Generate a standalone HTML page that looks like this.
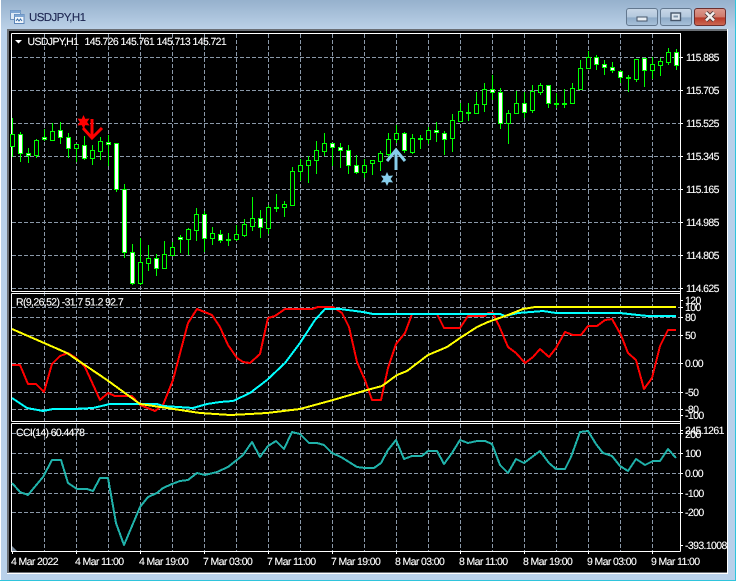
<!DOCTYPE html>
<html><head><meta charset="utf-8"><title>USDJPY,H1</title>
<style>
html,body{margin:0;padding:0;width:738px;height:581px;overflow:hidden;background:#fff}
svg{display:block;position:absolute;left:0;top:0}
text{font-family:"Liberation Sans",sans-serif;font-size:10.5px;letter-spacing:-.62px;fill:#fff;stroke:#fff;stroke-width:.12;text-rendering:geometricPrecision}
.g{fill:none;stroke:#8a98a8;stroke-width:1;stroke-dasharray:4 2;shape-rendering:crispEdges}
.l{fill:none;stroke-width:2;stroke-linejoin:round;shape-rendering:crispEdges}
</style></head><body>
<svg width="738" height="581" viewBox="0 0 738 581" xmlns="http://www.w3.org/2000/svg">
<defs>
<linearGradient id="t" x1="0" y1="0" x2="0" y2="1"><stop offset="0" stop-color="#96b1cd"/><stop offset="1" stop-color="#bcd2e8"/></linearGradient>
<linearGradient id="b" x1="0" y1="0" x2="0" y2="1"><stop offset="0" stop-color="#c9d8e8"/><stop offset=".5" stop-color="#b3c8dd"/><stop offset=".55" stop-color="#8fabc8"/><stop offset="1" stop-color="#a9c2da"/></linearGradient>
<linearGradient id="c" x1="0" y1="0" x2="0" y2="1"><stop offset="0" stop-color="#dc9a8e"/><stop offset=".5" stop-color="#cf7a6c"/><stop offset=".55" stop-color="#b93a28"/><stop offset="1" stop-color="#cc6a55"/></linearGradient>
</defs>
<!-- window chrome -->
<rect x="1" y="0" width="735" height="580" fill="#b9d1ea"/>
<rect x="1" y="0" width="735" height="30" fill="url(#t)"/>
<rect x="0" y="580" width="736" height="1" fill="#2fc4dc"/>
<rect x="735" y="0" width="1" height="581" fill="#2fc4dc"/>
<rect x="7" y="29" width="721" height="545" fill="#fff"/>
<rect x="7" y="29" width="720" height="544" fill="#6a6f75"/>
<rect x="9" y="31" width="718" height="541" fill="#000"/>
<!-- title icon -->
<rect x="10.5" y="10.5" width="10" height="9" fill="#dfeaf6" stroke="#6f93bd"/>
<rect x="10.5" y="10.5" width="10" height="2.5" fill="#7fa6d2"/>
<rect x="14.5" y="14.5" width="9.5" height="9" fill="#f2f7fc" stroke="#5d86b8"/>
<rect x="14.5" y="14.5" width="9.5" height="2.5" fill="#7fa6d2"/>
<path d="M16 21l1.5-2 1.5 2 1.5-2 1.5 2" fill="none" stroke="#3a6ea8"/>
<text x="29" y="21" style="font-size:11.5px;letter-spacing:-.6px;fill:#1c2550;stroke:#1c2550">USDJPY,H1</text>
<!-- buttons -->
<rect x="626.5" y="8.5" width="31" height="17" rx="2.5" fill="url(#b)" stroke="#63788f"/>
<rect x="637" y="17" width="10" height="4" fill="#e8eef4" stroke="#46566a" stroke-width="1"/>
<rect x="660.5" y="8.5" width="31" height="17" rx="2.5" fill="url(#b)" stroke="#63788f"/>
<rect x="671" y="13" width="9.5" height="7.5" fill="#dfe8f1" stroke="#46566a" stroke-width="1.4"/>
<rect x="673.5" y="15.5" width="4.5" height="2" fill="#7f93a8"/>
<rect x="694.5" y="8.5" width="31" height="17" rx="2.5" fill="url(#c)" stroke="#6b2f2f"/>
<path d="M706 12.5l8 8M714 12.5l-8 8" stroke="#4a3a3a" stroke-width="4.2"/>
<path d="M706 12.5l8 8M714 12.5l-8 8" stroke="#f4f1ef" stroke-width="2.6"/>
<!-- grid -->
<path class="g" d="M44.5 34V551M76.5 34V551M108.5 34V551M140.5 34V551M172.5 34V551M204.5 34V551M236.5 34V551M268.5 34V551M300.5 34V551M332.5 34V551M364.5 34V551M396.5 34V551M428.5 34V551M460.5 34V551M492.5 34V551M524.5 34V551M556.5 34V551M588.5 34V551M620.5 34V551M652.5 34V551"/>
<path class="g" d="M12 57.5H680M12 90.5H680M12 123.5H680M12 156.5H680M12 189.5H680M12 222.5H680M12 255.5H680M12 288.5H680M12 307.5H680M12 317.5H680M12 335.5H680M12 363.5H680M12 392.5H680M12 409.5H680M12 433.5H680M12 453.5H680M12 473.5H680M12 493.5H680M12 512.5H680"/>
<!-- frames -->
<path d="M11.5 33.5H680.5V551.5M11.5 33.5V291.5M11.5 291.5H680.5M11.5 293.5H680.5M11.5 293.5V421.5M11.5 421.5H680.5M11.5 423.5H680.5M11.5 423.5V551.5H680.5" fill="none" stroke="#fff" stroke-width="1" shape-rendering="crispEdges"/>
<polygon points="12,546 12,551 17,551" fill="#778899"/>
<polygon points="15,40 22,40 18.5,43.5" fill="#fff"/>
<!-- wicks -->
<path fill="none" stroke="#0f0" stroke-width="1" shape-rendering="crispEdges" d="M12.5 118V157M20.5 132V162M28.5 148V163M36.5 139V158M44.5 129V141M52.5 123V141M60.5 122V144M68.5 133V158M76.5 144V162M84.5 136V160M92.5 145V165M100.5 137V160M108.5 135V166M116.5 143V192M124.5 184V258M132.5 244V285M140.5 238V285M148.5 245V271M156.5 254V276M164.5 241V268M172.5 242V255M180.5 235V253M188.5 228V255M196.5 208V241M204.5 211V252M212.5 227V245M220.5 230V243M228.5 233V246M236.5 225V241M244.5 219V237M252.5 197V231M260.5 210V238M268.5 205V234M276.5 194V212M284.5 201V217M292.5 167V205M300.5 159V181M308.5 156V183M316.5 141V174M324.5 133V156M332.5 143V166M340.5 143V168M348.5 145V174M356.5 155V174M364.5 159V178M372.5 163V175M380.5 151V171M388.5 133V161M396.5 125V143M404.5 132V153M412.5 134V154M420.5 135V149M428.5 127V144M436.5 122V142M444.5 131V155M452.5 114V152M460.5 103V122M468.5 103V121M476.5 92V113M484.5 83V112M492.5 75V100M500.5 88V129M508.5 110V144M516.5 91V113M524.5 92V118M532.5 85V113M540.5 83V95M548.5 85V108M556.5 93V108M564.5 89V108M572.5 83V103M580.5 60V89M588.5 51V68M596.5 55V70M604.5 60V75M612.5 62V73M620.5 70V83M628.5 75V92M636.5 59V82M644.5 58V87M652.5 57V79M660.5 58V76M668.5 48V65M676.5 49V70"/>
<!-- hollow bodies -->
<path fill="#000" stroke="#0f0" stroke-width="1" shape-rendering="crispEdges" d="M10.5 134.5h4v12h-4zM34.5 140.5h4v15h-4zM50.5 131.5h4v9h-4zM74.5 144.5h4v4h-4zM90.5 150.5h4v8h-4zM98.5 141.5h4v10h-4zM138.5 262.5h4v21h-4zM146.5 258.5h4v5h-4zM162.5 254.5h4v14h-4zM170.5 247.5h4v8h-4zM186.5 229.5h4v10h-4zM194.5 214.5h4v16h-4zM210.5 233.5h4v5h-4zM234.5 234.5h4v5h-4zM242.5 224.5h4v11h-4zM250.5 218.5h4v8h-4zM266.5 207.5h4v21h-4zM282.5 204.5h4v3h-4zM290.5 171.5h4v34h-4zM298.5 165.5h4v6h-4zM306.5 160.5h4v5h-4zM314.5 150.5h4v10h-4zM322.5 143.5h4v8h-4zM362.5 165.5h4v7h-4zM370.5 160.5h4v3h-4zM378.5 153.5h4v8h-4zM386.5 139.5h4v15h-4zM394.5 133.5h4v6h-4zM410.5 138.5h4v14h-4zM426.5 130.5h4v9h-4zM450.5 120.5h4v18h-4zM458.5 111.5h4v10h-4zM474.5 104.5h4v9h-4zM482.5 89.5h4v15h-4zM506.5 113.5h4v10h-4zM514.5 103.5h4v10h-4zM530.5 91.5h4v19h-4zM538.5 85.5h4v7h-4zM570.5 88.5h4v15h-4zM578.5 68.5h4v21h-4zM586.5 57.5h4v11h-4zM634.5 59.5h4v20h-4zM650.5 64.5h4v6h-4zM658.5 61.5h4v4h-4zM666.5 52.5h4v10h-4z"/>
<!-- filled bodies and dashes -->
<path fill="#fff" stroke="#0f0" stroke-width="1" shape-rendering="crispEdges" d="M18.5 134.5h4v19h-4zM26.5 153.5h4v2h-4zM42.5 137.5h4v2h-4zM58.5 130.5h4v7h-4zM66.5 137.5h4v11h-4zM82.5 145.5h4v13h-4zM106.5 142.5h4v2h-4zM114.5 143.5h4v46h-4zM122.5 189.5h4v63h-4zM130.5 252.5h4v31h-4zM154.5 258.5h4v10h-4zM178.5 237.5h4v2h-4zM202.5 214.5h4v24h-4zM218.5 234.5h4v6h-4zM226.5 239.5h4v1h-4zM258.5 218.5h4v9h-4zM274.5 207.5h4v1h-4zM330.5 143.5h4v4h-4zM338.5 147.5h4v3h-4zM346.5 150.5h4v15h-4zM354.5 165.5h4v7h-4zM402.5 133.5h4v17h-4zM418.5 138.5h4v1h-4zM434.5 130.5h4v2h-4zM442.5 133.5h4v6h-4zM466.5 112.5h4v1h-4zM490.5 89.5h4v3h-4zM498.5 92.5h4v31h-4zM522.5 103.5h4v9h-4zM546.5 85.5h4v18h-4zM554.5 103.5h4v1h-4zM562.5 103.5h4v1h-4zM594.5 57.5h4v7h-4zM602.5 64.5h4v3h-4zM610.5 67.5h4v3h-4zM618.5 71.5h4v6h-4zM626.5 77.5h4v1h-4zM642.5 58.5h4v12h-4zM674.5 52.5h4v13h-4z"/>
<!-- arrows and stars -->
<g stroke="#f00" stroke-width="3" fill="none"><path d="M92 119V138M83 128L92 138L102 128"/></g>
<polygon transform="translate(-303.5,-57)" fill="#f00" points="387,172 388.8,175.9 393.1,175.5 390.6,179 393.1,182.5 388.8,182.1 387,186 385.2,182.1 380.9,182.5 383.4,179 380.9,175.5 385.2,175.9"/>
<g stroke="#87ceeb" stroke-width="3" fill="none"><path d="M396 170V150M387 161L396 150L405 161"/></g>
<polygon fill="#87ceeb" points="387,172 388.8,175.9 393.1,175.5 390.6,179 393.1,182.5 388.8,182.1 387,186 385.2,182.1 380.9,182.5 383.4,179 380.9,175.5 385.2,175.9"/>
<!-- indicator 1 -->
<polyline class="l" stroke="#f00" points="12,365 20,365 28,384 36,384 44,392 52,364 60,356 68,353 76,358 85,367 100,400 108,393 115,396 132,396 140,405 155,411 163,405 173,380 188,323 197,309 212,315 220,327 228,345 237,358 243,362 250,363 260,354 268,318 275,316 285,309 312,309 318,307 333,307 342,313 349,327 357,362 365,380 372,400 381,400 388,368 396,344 405,333 412,314 437,314 444,328 460,328 468,316 485,316 488,313 493,313 500,328 508,347 516,353 525,363 533,357 540,349 549,357 556,348 565,332 573,335 581,335 588,326 597,326 605,320 612,319 621,335 628,353 636,360 644,389 652,378 660,346 668,330 676,330"/>
<polyline class="l" stroke="#0ff" points="12,398 27,408 43,411 53,409 73,409 93,408 110,404 157,404 163,406 193,408 207,404 220,402 233,401 250,393 267,380 285,363 300,343 315,320 325,309 340,309 363,312 373,314 500,314 505,316 518,313 531,312 543,311 556,313 620,313 638,315 648,316 676,316"/>
<polyline class="l" stroke="#ff0" points="12,329 67,353 107,380 140,404 167,408 200,413 230,415 250,414 267,413 300,409 333,400 367,390 382,386 397,375 407,371 428,355 447,347 460,338 477,327 488,322 508,315 523,309 535,307 676,307"/>
<!-- indicator 2 -->
<polyline class="l" stroke="#20b2aa" points="12,483 20,492 28,495 43,477 52,460 61,460 68,483 77,489 87,489 93,491 100,478 108,478 116,523 124,545 140,507 148,497 157,493 163,488 172,484 180,481 188,480 197,473 205,475 217,472 228,467 243,455 252,442 260,457 268,446 276,441 284,449 292,432 300,434 309,443 317,443 324,445 332,453 341,457 349,462 357,467 365,468 374,468 381,463 388,450 396,440 404,459 412,456 422,456 428,451 437,451 444,464 452,453 460,440 468,443 477,441 485,441 492,444 500,465 508,473 516,459 524,463 540,451 549,463 556,469 565,469 571,457 580,432 588,431 596,444 603,453 612,456 620,466 628,471 636,459 645,465 653,461 660,461 668,449 676,458"/>
<!-- ticks -->
<path stroke="#fff" stroke-width="1" shape-rendering="crispEdges" d="M680 57.5h3M680 90.5h3M680 123.5h3M680 156.5h3M680 189.5h3M680 222.5h3M680 255.5h3M680 288.5h3M680 300.5h3M680 307.5h3M680 317.5h3M680 335.5h3M680 363.5h3M680 392.5h3M680 409.5h3M680 415.5h3M680 430.5h3M680 433.5h3M680 453.5h3M680 473.5h3M680 493.5h3M680 512.5h3M680 545.5h3M12.5 551v3M76.5 551v3M140.5 551v3M204.5 551v3M268.5 551v3M332.5 551v3M396.5 551v3M460.5 551v3M524.5 551v3M588.5 551v3M652.5 551v3"/>
<!-- header text -->
<text x="27.5" y="45">USDJPY,H1</text>
<text x="84.5" y="45">145.726</text><text x="120.5" y="45">145.761</text><text x="156.5" y="45">145.713</text><text x="192.5" y="45">145.721</text>
<text x="16" y="305.5">R(9,26,52) -31.7 51.2 92.7</text>
<text x="16" y="436">CCI(14) 60.4478</text>
<!-- right labels -->
<text x="686" y="61">115.885</text><text x="686" y="94">115.705</text><text x="686" y="127">115.525</text><text x="686" y="160">115.345</text><text x="686" y="193">115.165</text><text x="686" y="226">114.985</text><text x="686" y="259">114.805</text><text x="686" y="292">114.625</text>
<text x="685" y="304">120</text><text x="685" y="311">100</text><text x="685" y="321">80</text><text x="685" y="339">50</text><text x="685" y="367">0.00</text><text x="685" y="396">-50</text><text x="685" y="413">-80</text><text x="685" y="419">-100</text>
<text x="685" y="434">245.1261</text><text x="685" y="438">200</text><text x="685" y="457">100</text><text x="685" y="477">0.00</text><text x="685" y="497">-100</text><text x="685" y="516">-200</text><text x="685" y="549">-393.1008</text>
<!-- time labels -->
<text x="11" y="565">4 Mar 2022</text><text x="75" y="565">4 Mar 11:00</text><text x="139" y="565">4 Mar 19:00</text><text x="203" y="565">7 Mar 03:00</text><text x="267" y="565">7 Mar 11:00</text><text x="331" y="565">7 Mar 19:00</text><text x="395" y="565">8 Mar 03:00</text><text x="459" y="565">8 Mar 11:00</text><text x="523" y="565">8 Mar 19:00</text><text x="587" y="565">9 Mar 03:00</text><text x="651" y="565">9 Mar 11:00</text>
</svg>
</body></html>
